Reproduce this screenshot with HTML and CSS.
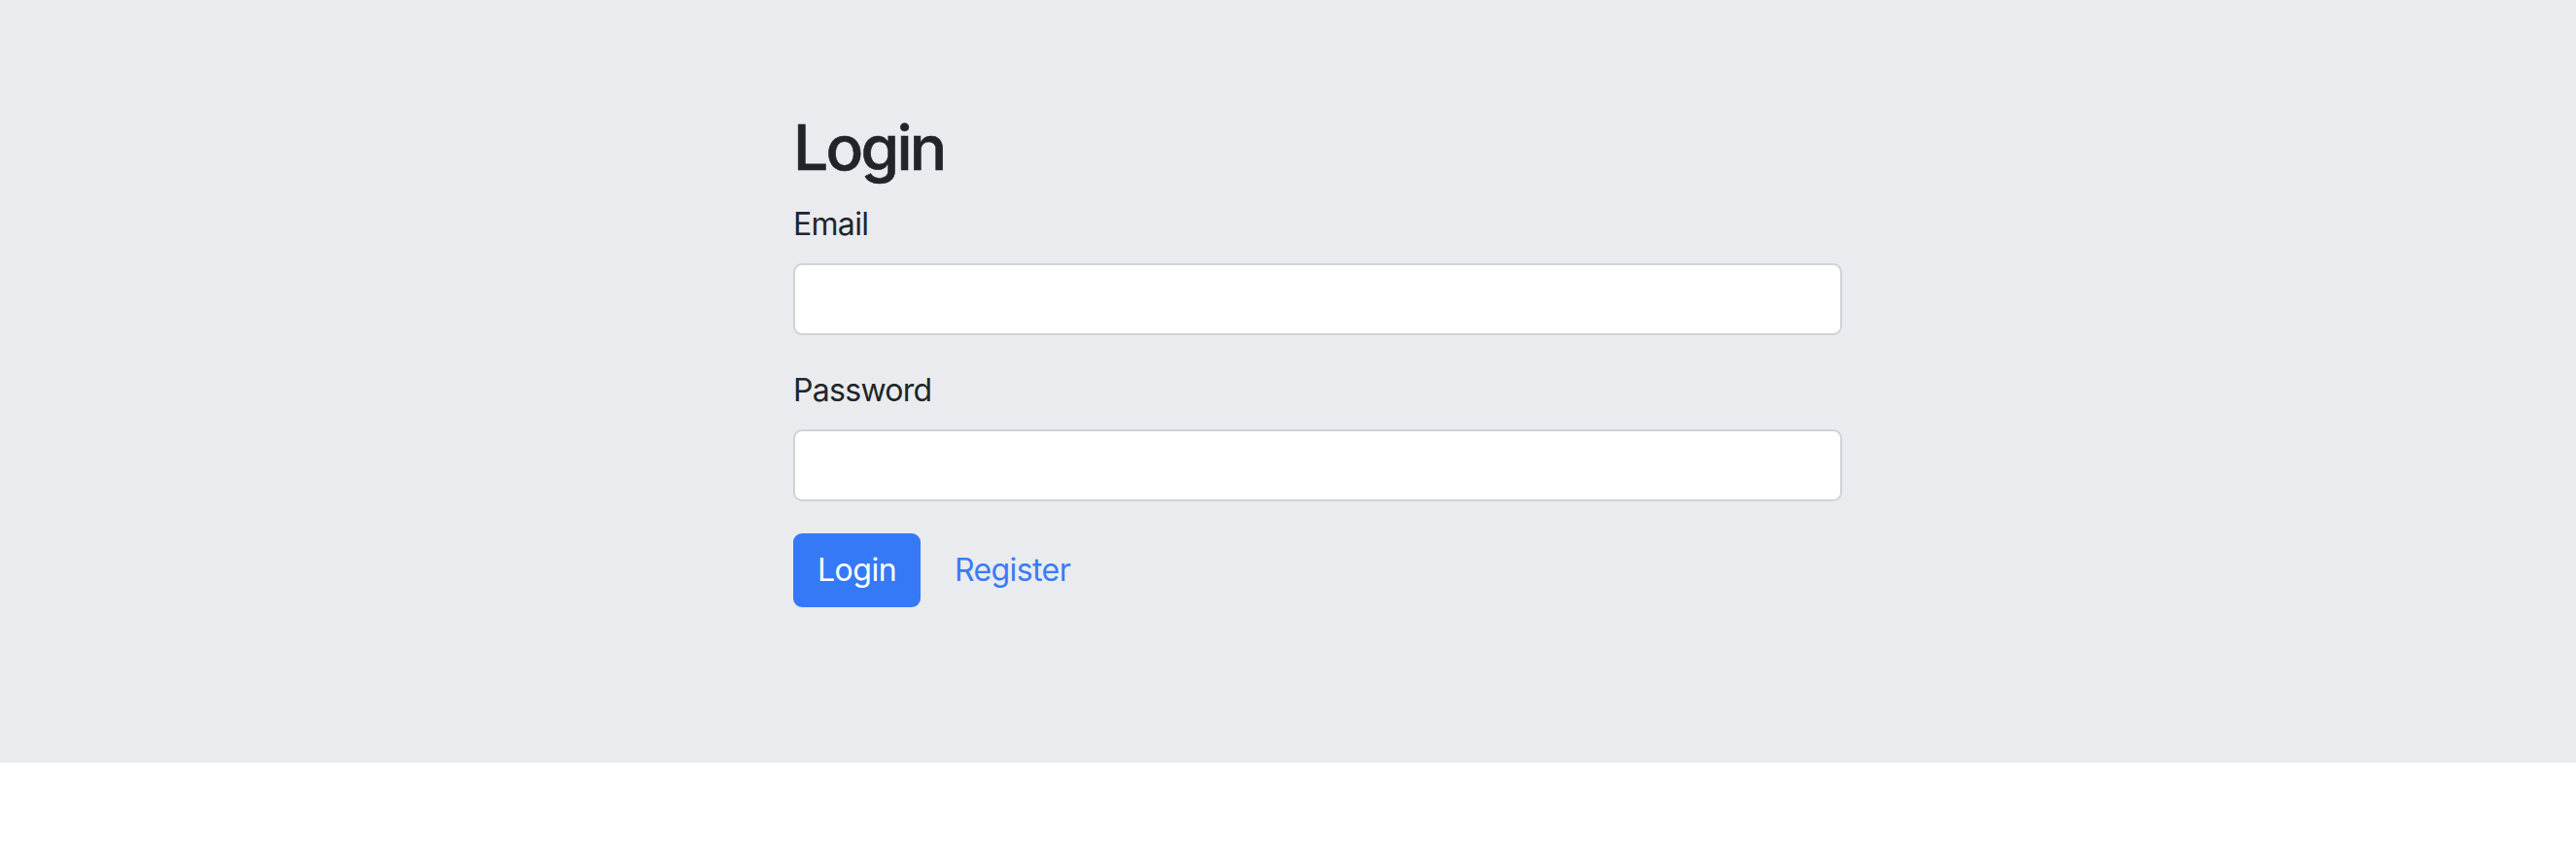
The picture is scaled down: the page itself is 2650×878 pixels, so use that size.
FILE: index.html
```html
<!DOCTYPE html>
<html lang="en">
<head>
<meta charset="utf-8">
<title>Login</title>
<link rel="stylesheet" href="styles.css">
</head>
<body>
<section class="hero">
  <form class="login-form">
    <h2 class="title">Login</h2>
    <div class="field">
      <label class="label" for="email">Email</label>
      <input class="input" id="email" type="email">
    </div>
    <div class="field">
      <label class="label" for="password">Password</label>
      <input class="input" id="password" type="password">
    </div>
    <div class="actions">
      <button class="btn" type="button">Login</button>
      <a class="link" href="#">Register</a>
    </div>
  </form>
</section>
</body>
</html>
```

FILE: styles.css
```css
* { box-sizing: border-box; }
html, body { margin: 0; padding: 0; background: #ffffff; }
body {
  font-family: Inter, "Liberation Sans", sans-serif;
  color: #212529;
  font-size: 32px;
  line-height: 1.5;
}
.hero {
  background: #e9ebef;
  height: 785px;
  padding: 114px 0 0 816px;
}
.login-form {
  width: 1079px;
}
.title {
  margin: 0;
  font-size: 64px;
  font-weight: 500;
  line-height: 1.2;
  letter-spacing: -2.7px;
  height: 93px;
  -webkit-text-stroke: 0.6px #212529;
}
.field {
  margin-bottom: 33px;
}
.label {
  display: block;
  margin-bottom: 16px;
  font-size: 32px;
  line-height: 48px;
  letter-spacing: -0.7px;
  color: #212529;
}
.input {
  display: block;
  width: 100%;
  height: 74px;
  border: 2px solid #cfd3d9;
  border-radius: 9px;
  background: #ffffff;
  font: inherit;
  padding: 12px 24px;
  outline: none;
}
.actions {
  display: flex;
  align-items: center;
}
.btn {
  height: 76px;
  width: 131px;
  background: #3579f6;
  color: #ffffff;
  border: 0;
  border-radius: 9px;
  font: inherit;
  font-size: 32px;
  letter-spacing: -0.5px;
  padding: 0;
}
.link {
  margin-left: 35px;
  color: #3a7cf2;
  text-decoration: none;
  font-size: 32px;
  letter-spacing: -0.6px;
}
```
